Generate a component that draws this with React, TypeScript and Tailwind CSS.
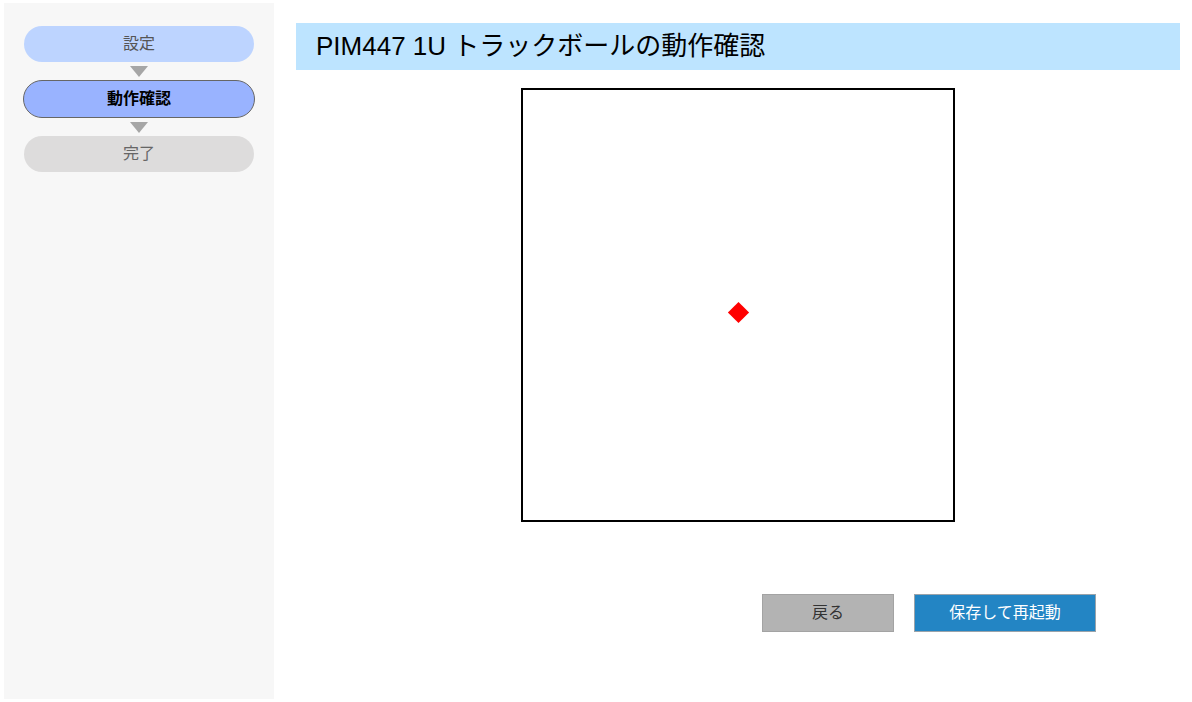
import React from "react";

const jp = { fontFamily: '"Liberation Sans", Arial, "Noto Sans CJK JP", sans-serif' };

function Arrow() {
  return (
    <div className="h-[18px] flex items-center justify-center">
      <div className="w-0 h-0 border-l-[9px] border-r-[9px] border-t-[11px] border-l-transparent border-r-transparent border-t-[#a6a6a6]" />
    </div>
  );
}

export default function App() {
  return (
    <div className="w-[1192px] h-[702px] bg-white flex pt-[3px] pl-[4px]" style={jp}>
      <div className="w-[270px] h-[696px] bg-[#f7f7f7] pt-[23px] px-[20px] flex flex-col">
        <div className="h-[36px] rounded-full bg-[#bdd4ff] flex items-center justify-center text-[16px] text-[#555]">設定</div>
        <Arrow />
        <div className="h-[38px] -mx-[1px] rounded-full bg-[#99b3ff] border border-[#666] flex items-center justify-center text-[16px] font-bold text-black">動作確認</div>
        <Arrow />
        <div className="h-[36px] rounded-full bg-[#dddcdc] flex items-center justify-center text-[16px] text-[#666]">完了</div>
      </div>
      <div className="flex-1 pl-[22px] pr-[12px] pt-[20px] flex flex-col">
        <div className="h-[47px] bg-[#bde4ff] flex items-center pl-[20px] text-[26px] text-black">PIM447 1U トラックボールの動作確認</div>
        <div className="flex justify-center mt-[18px]">
          <div className="relative w-[434px] h-[434px] border-2 border-black">
            <div className="absolute left-[208px] top-[215px] w-[15px] h-[15px] bg-[#ff0000] rotate-45" />
          </div>
        </div>
        <div className="flex justify-end gap-[20px] pr-[84px] mt-[72px]">
          <button className="w-[132px] h-[38px] bg-[#b3b3b3] border border-[#a3a3a3] text-[16px] text-[#333]">戻る</button>
          <button className="w-[182px] h-[38px] bg-[#2385c4] border border-[#9aa3aa] text-[16px] text-white">保存して再起動</button>
        </div>
      </div>
    </div>
  );
}
